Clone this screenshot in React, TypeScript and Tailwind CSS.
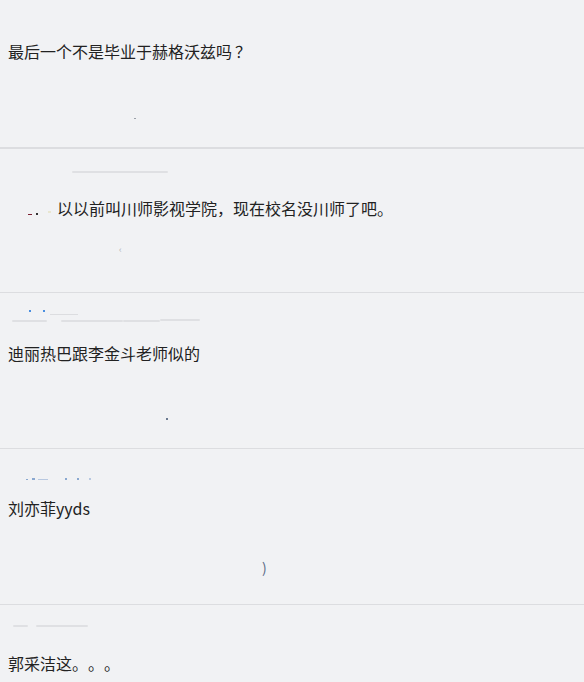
import React from 'react';

const font = "font-['Noto_Sans_CJK_SC','Noto_Sans',sans-serif]";

const FaintLine: React.FC<{ className: string }> = ({ className }) => (
  <div className={`h-[2px] rounded-full bg-[#dfe0e3] ${className}`}></div>
);

const CommentText: React.FC<{ children: React.ReactNode; className?: string }> = ({ children, className = '' }) => (
  <p className={`text-[16px] leading-[22px] text-[#222] whitespace-nowrap [text-spacing-trim:space-all] ${className}`}>{children}</p>
);

export default function App() {
  return (
    <div className={`w-[584px] h-[682px] overflow-hidden bg-[#f1f2f4] ${font}`}>
      {/* 1 */}
      <div className="h-[149px] border-b-2 border-[#dcdde0] pt-[40px] pl-[8px]">
        <CommentText>最后一个不是毕业于赫格沃兹吗<span className="ml-[3px]">？</span></CommentText>
        <div className="mt-[56px] ml-[126px] w-[2px] h-[1px] bg-[#9aa0a8]"></div>
      </div>

      {/* 2 */}
      <div className="h-[144px] border-b border-[#dcdde0] pt-[22px]">
        <FaintLine className="ml-[72px] w-[96px]" />
        <div className="mt-[24px] flex items-end">
          <span className="ml-[28px] mb-[4px] w-[4px] h-[1px] bg-[#7a2030]"></span>
          <span className="ml-[4px] mb-[4px] w-[2px] h-[2px] bg-[#333]"></span>
          <span className="ml-[10px] mb-[6px] w-[3px] h-[2px] bg-[#e8e6d0]"></span>
          <CommentText className="ml-[6px]">以以前叫川师影视学院，现在校名没川师了吧。</CommentText>
        </div>
        <div className="mt-[26px] ml-[119px] text-[9px] leading-[10px] text-[#b0b4ba]">‹</div>
      </div>

      {/* 3 */}
      <div className="h-[156px] border-b border-[#dcdde0] pt-[17px]">
        <div className="flex items-center h-[2px]">
          <span className="ml-[29px] w-[2px] h-[2px] bg-[#4a8fe0]"></span>
          <span className="ml-[12px] w-[2px] h-[2px] bg-[#4a8fe0]"></span>
          <span className="ml-[5px] mt-[6px] w-[28px] h-[1px] bg-[#dcdde0]"></span>
        </div>
        <div className="mt-[8px] flex items-center">
          <FaintLine className="ml-[12px] w-[35px]" />
          <FaintLine className="ml-[14px] w-[62px]" />
          <FaintLine className="w-[37px]" />
          <FaintLine className="-mt-[3px] w-[40px]" />
        </div>
        <CommentText className="mt-[20px] pl-[8px]">迪丽热巴跟李金斗老师似的</CommentText>
        <div className="mt-[54px] ml-[166px] w-[2px] h-[2px] bg-[#6b7a90]"></div>
      </div>

      {/* 4 */}
      <div className="h-[156px] border-b border-[#dcdde0] pt-[29px]">
        <div className="flex items-center h-[2px]">
          <span className="ml-[26px] w-[2px] h-[1px] bg-[#8aa8d0]"></span>
          <span className="ml-[4px] w-[3px] h-[2px] bg-[#8aa8d0]"></span>
          <span className="ml-[3px] w-[10px] h-[1px] bg-[#b8c8e0]"></span>
          <span className="ml-[17px] w-[2px] h-[2px] bg-[#8aa8d0]"></span>
          <span className="ml-[10px] w-[2px] h-[2px] bg-[#8aa8d0]"></span>
          <span className="ml-[10px] w-[2px] h-[2px] bg-[#b8c8e0]"></span>
        </div>
        <CommentText className="mt-[17px] pl-[8px]">刘亦菲yyds</CommentText>
        <div className="mt-[40px] ml-[262px] text-[14px] leading-[16px] text-[#5a6a85]">)</div>
      </div>

      {/* 5 */}
      <div className="pt-[20px]">
        <div className="flex items-center">
          <FaintLine className="ml-[13px] w-[15px]" />
          <FaintLine className="ml-[8px] w-[52px]" />
        </div>
        <CommentText className="mt-[25px] pl-[8px]">郭采洁这。。。</CommentText>
      </div>
    </div>
  );
}
